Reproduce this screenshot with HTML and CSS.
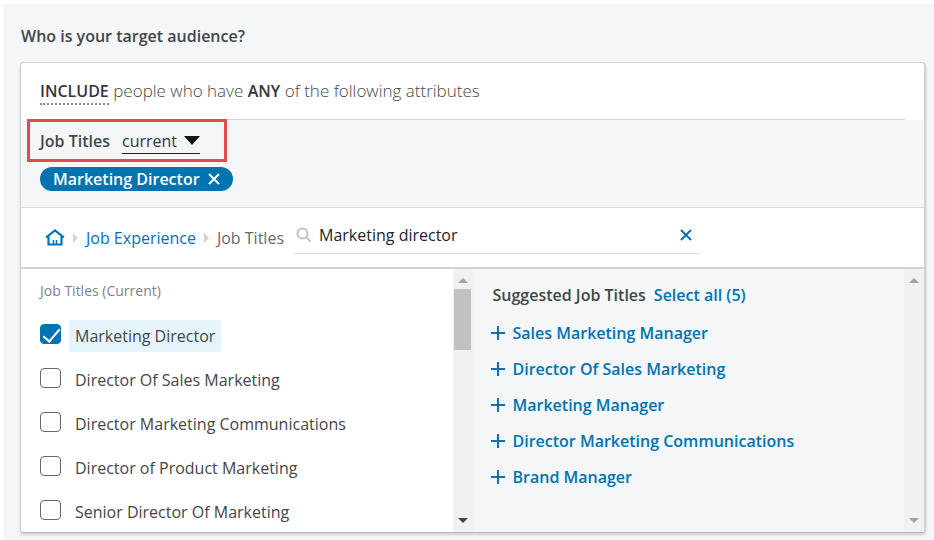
FILE: index.html
```html
<!DOCTYPE html>
<html lang="en">
<head>
    <meta charset="UTF-8">
    <meta name="viewport" content="width=device-width, initial-scale=1.0">
    <title>Target Audience</title>
    <link rel="stylesheet" href="styles.css">
</head>
<body>
    <main class="page">
        <h1>Who is your target audience?</h1>

        <div class="card">
            <div class="rule">
                <p><strong class="include">INCLUDE</strong> people who have <strong>ANY</strong> of the following attributes</p>
            </div>

            <div class="selected">
                <div class="facet">
                    <label for="timeframe">Job Titles</label>
                    <div class="dropdown">
                        <select id="timeframe">
                            <option>current</option>
                            <option>past</option>
                        </select>
                        <svg class="caret" viewBox="0 0 16 9"><path d="M0 0h16L8 9z"/></svg>
                    </div>
                </div>
                <button class="pill">
                    Marketing Director
                    <svg viewBox="0 0 12 12"><path d="M1 1l10 10M11 1L1 11"/></svg>
                </button>
            </div>

            <div class="browse">
                <nav class="crumbs">
                    <a href="#" class="home" aria-label="Home">
                        <svg viewBox="0 0 20 18"><path d="M1 8.500L10 1.500l9 7M3.500 7.500V15.500h13V7.500" stroke-width="2.200"/><path d="M8.500 15v-4M11.500 15v-4" stroke-width="1.500"/></svg>
                    </a>
                    <span class="arrow"></span>
                    <a href="#">Job Experience</a>
                    <span class="arrow"></span>
                    <span>Job Titles</span>
                </nav>
                <div class="search">
                    <svg class="glass" viewBox="0 0 16 16"><circle cx="6.500" cy="6.500" r="5"/><path d="M10.500 10.500L14.500 14.500"/></svg>
                    <input type="text" aria-label="Search job titles" value="Marketing director">
                    <button class="clear" aria-label="Clear">
                        <svg viewBox="0 0 12 12"><path d="M1 1l10 10M11 1L1 11"/></svg>
                    </button>
                </div>
            </div>

            <div class="panes">
                <div class="results">
                    <h2>Job Titles (Current)</h2>
                    <div class="option"><input type="checkbox" id="t1" checked><label for="t1">Marketing Director</label></div>
                    <div class="option"><input type="checkbox" id="t2"><label for="t2">Director Of Sales Marketing</label></div>
                    <div class="option"><input type="checkbox" id="t3"><label for="t3">Director Marketing Communications</label></div>
                    <div class="option"><input type="checkbox" id="t4"><label for="t4">Director of Product Marketing</label></div>
                    <div class="option"><input type="checkbox" id="t5"><label for="t5">Senior Director Of Marketing</label></div>
                </div>
                <div class="scrollbar">
                    <svg class="up" viewBox="0 0 10 5"><path d="M0 5h10L5 0z"/></svg>
                    <div class="thumb"></div>
                    <svg class="down dark" viewBox="0 0 10 5"><path d="M0 0h10L5 5z"/></svg>
                </div>
                <div class="suggested">
                    <div class="heading">
                        <h2>Suggested Job Titles</h2>
                        <a href="#">Select all (5)</a>
                    </div>
                    <button><svg viewBox="0 0 16 16"><path d="M8 1v14M1 8h14"/></svg>Sales Marketing Manager</button>
                    <button><svg viewBox="0 0 16 16"><path d="M8 1v14M1 8h14"/></svg>Director Of Sales Marketing</button>
                    <button><svg viewBox="0 0 16 16"><path d="M8 1v14M1 8h14"/></svg>Marketing Manager</button>
                    <button><svg viewBox="0 0 16 16"><path d="M8 1v14M1 8h14"/></svg>Director Marketing Communications</button>
                    <button><svg viewBox="0 0 16 16"><path d="M8 1v14M1 8h14"/></svg>Brand Manager</button>
                </div>
                <div class="scrollbar">
                    <svg class="up" viewBox="0 0 10 5"><path d="M0 5h10L5 0z"/></svg>
                    <svg class="down" viewBox="0 0 10 5"><path d="M0 0h10L5 5z"/></svg>
                </div>
            </div>
        </div>
    </main>
</body>
</html>
```
FILE: styles.css
```css
* {
    box-sizing: border-box;
}
body {
    margin: 0;
    padding: 4px 0 0 3px;
    background-color: white;
    font-family: "Open Sans", "Noto Sans", sans-serif;
    font-size: 16px;
    line-height: 24px;
    color: #434649;
}
h1, h2, p {
    margin: 0;
    font-size: 16px;
    font-weight: 600;
}
button, input, select {
    font: inherit;
    border: none;
    padding: 0;
    background: none;
}
button {
    cursor: pointer;
}
a {
    color: #0073b1;
    text-decoration: none;
}
svg {
    display: block;
    fill: none;
}
.page {
    padding: 20px 8px 7px 17px;
    background-color: #f4f6f8;
}
.page h1 {
    margin: 0 0 14px 1px;
}
.card {
    border: 1px solid #d0d3d6;
    border-right-width: 2px;
    border-bottom-color: #b4b7ba;
    border-radius: 4px;
    background-color: white;
    box-shadow: 0 2px 3px rgba(0,0,0,0.15);
}
.rule {
    margin: 0 19px;
    padding: 16px 0;
    border-bottom: 1px solid #d0d3d6;
}
.rule p {
    font-size: 17px;
    font-weight: 300;
    color: #46494c;
}
.rule strong {
    font-size: 16px;
    font-weight: 600;
    color: #33363a;
}
.rule .include {
    padding-bottom: 1px;
    border-bottom: 2px dotted #8c8f92;
}
.selected {
    display: flow-root;
    padding: 0 6px 16px;
    background-color: #f4f6f8;
    border-bottom: 1px solid #dcdfe1;
}
.facet {
    display: flex;
    align-items: center;
    gap: 12px;
    width: 200px;
    height: 43px;
    margin-top: -1px;
    padding-left: 10px;
    border: 3px solid #df4f49;
    font-weight: 600;
}
.dropdown {
    display: flex;
    align-items: center;
    gap: 6px;
    padding-top: 1px;
    border-bottom: 1px solid #222;
    font-weight: 400;
}
.dropdown select {
    appearance: none;
    color: #33363a;
}
.caret {
    width: 16px;
    height: 9px;
    fill: #111;
}
.pill {
    display: flex;
    align-items: center;
    gap: 8px;
    height: 24px;
    margin: 5px 0 0 13px;
    padding: 0 13px;
    border-radius: 12px;
    background-color: #0073b1;
    color: white;
    font-weight: 600;
}
.pill svg, .clear svg {
    width: 12px;
    height: 12px;
    stroke: white;
    stroke-width: 2;
}
.browse {
    display: flex;
    align-items: center;
    gap: 10px;
    height: 61px;
    padding-left: 24px;
    border-bottom: 2px solid #d0d3d6;
}
.crumbs {
    display: flex;
    align-items: center;
    gap: 8px;
    color: #66696c;
}
.home svg {
    width: 20px;
    height: 18px;
    stroke: #0073b1;
}
.arrow {
    border: 5px solid transparent;
    border-left-color: #d0d3d6;
    border-right: none;
}
.search {
    display: flex;
    align-items: center;
    gap: 7px;
    width: 406px;
    height: 36px;
    margin-bottom: 4px;
    padding: 0 8px 0 2px;
    border-bottom: 1px solid #dcdfe1;
}
.search input {
    flex: 1;
    min-width: 0;
    color: #222528;
    outline: none;
}
.glass {
    width: 16px;
    height: 16px;
    stroke: #bfc1c3;
    stroke-width: 2;
}
.clear svg {
    stroke: #0073b1;
}
.panes {
    display: grid;
    grid-template-columns: 1fr 20px 1fr 20px;
}
.results {
    padding: 10px 0 4px 19px;
}
.results h2 {
    margin-bottom: 17px;
    font-size: 14px;
    font-weight: 400;
    color: #808386;
}
.option {
    display: flex;
    align-items: flex-start;
    gap: 8px;
    margin-bottom: 12px;
}
.option:last-child {
    margin-bottom: 0;
}
.option input {
    appearance: none;
    width: 21px;
    height: 20px;
    margin: 4px 0 0;
    border: 1px solid #66696c;
    border-radius: 4px;
}
.option input:checked {
    border-color: #0073b1;
    background-color: #0073b1;
}
.option input:checked::before {
    content: "";
    display: block;
    width: 7px;
    height: 15px;
    margin: 0 6px;
    border: solid white;
    border-width: 0 2px 2px 0;
    transform: rotate(40deg);
}
.option label {
    padding: 4px 6px;
}
.option input:checked + label {
    background-color: #e6f5fc;
}
.scrollbar {
    display: flex;
    flex-direction: column;
    align-items: center;
    padding: 9px 0;
    background-color: #f0f1f1;
}
.scrollbar svg {
    width: 10px;
    height: 5px;
    fill: #a3a3a3;
}
.scrollbar .down {
    margin-top: auto;
}
.scrollbar .dark {
    fill: #444;
}
.thumb {
    width: 17px;
    height: 61px;
    margin-top: 6px;
    background-color: #c1c1c1;
}
.suggested {
    padding: 14px 17px 0;
    background-color: #f4f6f8;
    font-weight: 600;
}
.heading {
    display: flex;
    gap: 8px;
    margin: 0 0 8px 3px;
}
.suggested button {
    display: flex;
    align-items: center;
    gap: 7px;
    height: 36px;
    color: #0073b1;
}
.suggested svg {
    width: 16px;
    height: 16px;
    stroke: #0073b1;
    stroke-width: 2;
}
```
